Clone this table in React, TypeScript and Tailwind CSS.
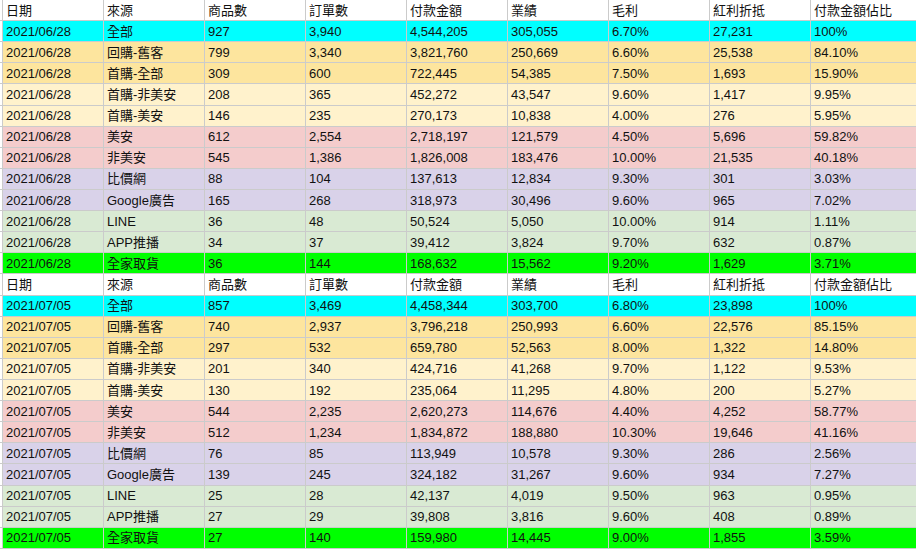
const headers = ["日期", "來源", "商品數", "訂單數", "付款金額", "業績", "毛利", "紅利折抵", "付款金額佔比"];

// one background per source row, same order in both weeks
const rowBg = [
  "bg-[#00ffff]",
  "bg-[#fde59e]",
  "bg-[#fde59e]",
  "bg-[#fff2cc]",
  "bg-[#fff2cc]",
  "bg-[#f4cccc]",
  "bg-[#f4cccc]",
  "bg-[#d9d2e9]",
  "bg-[#d9d2e9]",
  "bg-[#d9ead3]",
  "bg-[#d9ead3]",
  "bg-[#00ff00]",
];

const weeks: { date: string; rows: string[][] }[] = [
  {
    date: "2021/06/28",
    rows: [
      ["全部", "927", "3,940", "4,544,205", "305,055", "6.70%", "27,231", "100%"],
      ["回購-舊客", "799", "3,340", "3,821,760", "250,669", "6.60%", "25,538", "84.10%"],
      ["首購-全部", "309", "600", "722,445", "54,385", "7.50%", "1,693", "15.90%"],
      ["首購-非美安", "208", "365", "452,272", "43,547", "9.60%", "1,417", "9.95%"],
      ["首購-美安", "146", "235", "270,173", "10,838", "4.00%", "276", "5.95%"],
      ["美安", "612", "2,554", "2,718,197", "121,579", "4.50%", "5,696", "59.82%"],
      ["非美安", "545", "1,386", "1,826,008", "183,476", "10.00%", "21,535", "40.18%"],
      ["比價網", "88", "104", "137,613", "12,834", "9.30%", "301", "3.03%"],
      ["Google廣告", "165", "268", "318,973", "30,496", "9.60%", "965", "7.02%"],
      ["LINE", "36", "48", "50,524", "5,050", "10.00%", "914", "1.11%"],
      ["APP推播", "34", "37", "39,412", "3,824", "9.70%", "632", "0.87%"],
      ["全家取貨", "36", "144", "168,632", "15,562", "9.20%", "1,629", "3.71%"],
    ],
  },
  {
    date: "2021/07/05",
    rows: [
      ["全部", "857", "3,469", "4,458,344", "303,700", "6.80%", "23,898", "100%"],
      ["回購-舊客", "740", "2,937", "3,796,218", "250,993", "6.60%", "22,576", "85.15%"],
      ["首購-全部", "297", "532", "659,780", "52,563", "8.00%", "1,322", "14.80%"],
      ["首購-非美安", "201", "340", "424,716", "41,268", "9.70%", "1,122", "9.53%"],
      ["首購-美安", "130", "192", "235,064", "11,295", "4.80%", "200", "5.27%"],
      ["美安", "544", "2,235", "2,620,273", "114,676", "4.40%", "4,252", "58.77%"],
      ["非美安", "512", "1,234", "1,834,872", "188,880", "10.30%", "19,646", "41.16%"],
      ["比價網", "76", "85", "113,949", "10,578", "9.30%", "286", "2.56%"],
      ["Google廣告", "139", "245", "324,182", "31,267", "9.60%", "934", "7.27%"],
      ["LINE", "25", "28", "42,137", "4,019", "9.50%", "963", "0.95%"],
      ["APP推播", "27", "29", "39,808", "3,816", "9.60%", "408", "0.89%"],
      ["全家取貨", "27", "140", "159,980", "14,445", "9.00%", "1,855", "3.59%"],
    ],
  },
];

function Row({ cells, bg }: { cells: string[]; bg: string }) {
  return (
    <div className="flex-1 flex border-b border-[#cbcbcb]">
      <div className="w-[3px] shrink-0 border-r border-[#cbcbcb] bg-white" />
      {cells.map((c, i) => (
        <div
          key={i}
          className={`${bg} ${i === cells.length - 1 ? "flex-1" : "w-[101px] border-r border-[#cbcbcb]"} shrink-0 flex items-center pl-[3px] whitespace-nowrap overflow-hidden`}
        >
          {c}
        </div>
      ))}
    </div>
  );
}

export default function App() {
  return (
    <div
      className="w-[916px] h-[549px] overflow-hidden bg-white flex flex-col text-[13px] leading-none text-[#111]"
      style={{ fontFamily: '"Liberation Sans", Arial, "Noto Sans CJK TC", sans-serif' }}
    >
      {weeks.map((w) => (
        <div key={w.date} className="contents">
          <Row cells={headers} bg="bg-white" />
          {w.rows.map((r, i) => (
            <Row key={i} cells={[w.date, ...r]} bg={rowBg[i]} />
          ))}
        </div>
      ))}
    </div>
  );
}
